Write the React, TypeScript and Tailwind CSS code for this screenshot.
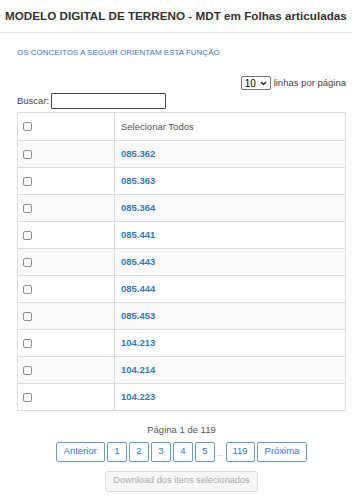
import React from 'react';

const rows = ['085.362', '085.363', '085.364', '085.441', '085.443', '085.444', '085.453', '104.213', '104.214', '104.223'];
const pages = ['1', '2', '3', '4', '5'];

function Box() {
  return <span className="block w-[9px] h-[9px] rounded-[2px] border border-[#8f8f8f] bg-white" />;
}

export default function App() {
  return (
    <div className="w-[352px] h-[498px] overflow-hidden bg-white text-[#333] font-['Liberation_Sans',Arial,sans-serif]">
      <div className="h-[33px] border-b border-[#e5e5e5] pl-[5px] pt-[8px] whitespace-nowrap overflow-hidden">
        <h1 className="text-[11.7px] font-bold leading-[16px]">MODELO DIGITAL DE TERRENO - MDT em Folhas articuladas</h1>
      </div>

      <div className="pl-[17px] pr-[6px] pt-[15px]">
        <a className="block text-[8px] leading-[10px] text-[#3c78b5]">OS CONCEITOS A SEGUIR ORIENTAM ESTA FUNÇÃO</a>

        <div className="flex justify-end items-center gap-[3px] mt-[18px] text-[9.5px] text-[#444]">
          <div className="flex items-center justify-between w-[30px] h-[14px] border border-[#767676] rounded-[2px] px-[3px] text-[10px] text-black">
            <span>10</span>
            <svg width="7" height="5" viewBox="0 0 7 5"><path d="M1 1l2.5 2.5L6 1" stroke="#222" strokeWidth="1.4" fill="none" /></svg>
          </div>
          <span>linhas por página</span>
        </div>

        <div className="flex items-center gap-[2px] mt-[3px] text-[9.5px] text-[#444]">
          <span>Buscar:</span>
          <span className="block w-[115px] h-[16px] border border-[#444] rounded-[1px]" />
        </div>

        <div className="mt-[3px] border border-[#ddd] text-[9.5px]">
          <div className="flex h-[27px] items-center">
            <div className="w-[97px] h-full flex items-center pl-[5px] border-r border-[#ddd]"><Box /></div>
            <div className="pl-[6px] text-[#555]">Selecionar Todos</div>
          </div>
          {rows.map((r, i) => (
            <div key={r} className={`flex h-[27px] items-center border-t border-[#ddd] ${i % 2 === 0 ? 'bg-[#f9f9f9]' : 'bg-white'}`}>
              <div className="w-[97px] h-full flex items-center pl-[5px] border-r border-[#ddd]"><Box /></div>
              <div className="pl-[6px] font-bold text-[#337ab7]">{r}</div>
            </div>
          ))}
        </div>

        <div className="text-center text-[9.5px] text-[#555] mt-[12px]">Página 1 de 119</div>

        <div className="flex justify-center items-center gap-[2px] mt-[4px] text-[9.5px] text-[#337ab7]">
          <span className="h-[20px] px-[7px] flex items-center border border-[#6f9cc7] rounded-[2px]">Anterior</span>
          {pages.map(p => (
            <span key={p} className="w-[20px] h-[20px] flex items-center justify-center border border-[#6f9cc7] rounded-[2px]">{p}</span>
          ))}
          <span className="text-[#aaa] text-[8px] self-end pb-[2px]">...</span>
          <span className="w-[29px] h-[20px] flex items-center justify-center border border-[#6f9cc7] rounded-[2px]">119</span>
          <span className="h-[20px] px-[7px] flex items-center border border-[#6f9cc7] rounded-[2px]">Próxima</span>
        </div>

        <div className="flex justify-center mt-[9px]">
          <span className="h-[21px] px-[7px] flex items-center border border-[#ddd] rounded-[3px] bg-[#f6f6f6] text-[9.2px] text-[#aaa]">Download dos itens selecionados</span>
        </div>
      </div>
    </div>
  );
}
